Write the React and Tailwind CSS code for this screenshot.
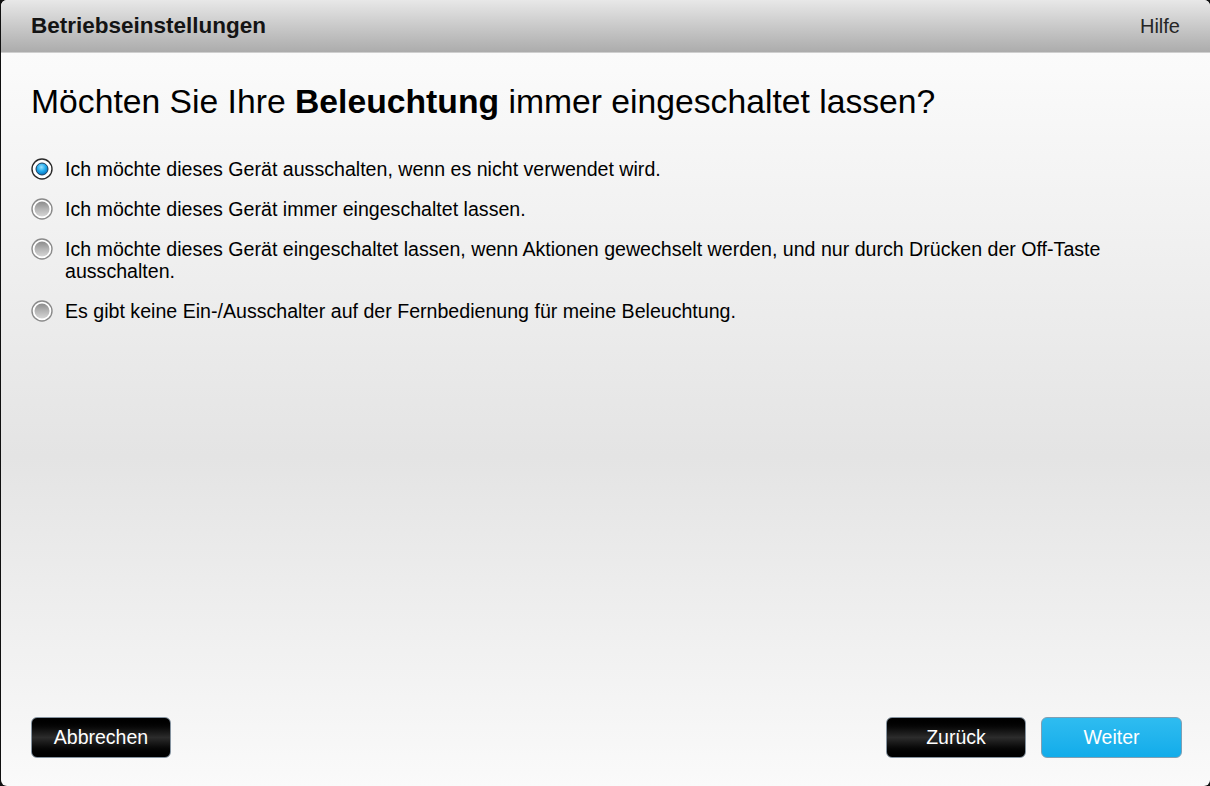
import React, { useState } from "react";

const options = [
  "Ich möchte dieses Gerät ausschalten, wenn es nicht verwendet wird.",
  "Ich möchte dieses Gerät immer eingeschaltet lassen.",
  "Ich möchte dieses Gerät eingeschaltet lassen, wenn Aktionen gewechselt werden, und nur durch Drücken der Off-Taste ausschalten.",
  "Es gibt keine Ein-/Ausschalter auf der Fernbedienung für meine Beleuchtung.",
];

const Radio = ({ checked }) => (
  <svg width="22" height="22" viewBox="0 0 22 22" className="shrink-0">
    <defs>
      <radialGradient id="blueDot" cx="45%" cy="35%" r="65%">
        <stop offset="0%" stopColor="#9be3ff" />
        <stop offset="55%" stopColor="#1fa9ec" />
        <stop offset="100%" stopColor="#0a6fb8" />
      </radialGradient>
      <linearGradient id="grayDot" x1="0" y1="0" x2="0" y2="1">
        <stop offset="0%" stopColor="#8c8c8c" />
        <stop offset="50%" stopColor="#b4b4b4" />
        <stop offset="100%" stopColor="#d6d6d6" />
      </linearGradient>
    </defs>
    <circle cx="11" cy="11" r="10" fill="#fff" stroke={checked ? "#2a2a2a" : "#8a8a8a"} strokeWidth="1.4" />
    {checked ? (
      <circle cx="11" cy="11" r="6" fill="url(#blueDot)" stroke="#1c3e5c" strokeWidth="1" />
    ) : (
      <circle cx="11" cy="11" r="7.5" fill="url(#grayDot)" />
    )}
  </svg>
);

const DarkButton = ({ children }) => (
  <button className="flex h-[41px] w-[140px] items-center justify-center rounded-[6px] border border-[#8593a0] bg-linear-to-b from-black via-[#2c2c2c] to-black text-[19.5px] text-white">
    {children}
  </button>
);

export default function App() {
  const [selected, setSelected] = useState(0);

  return (
    <div className="h-[786px] w-[1210px] bg-[#101010] pl-px font-['Liberation_Sans',Arial,sans-serif]">
      <div className="flex h-full flex-col overflow-hidden rounded-[6px] bg-linear-to-b from-[#fefefe] via-[#e4e4e4] via-58% to-[#fafafa]">
        <div className="flex h-[53px] shrink-0 items-center justify-between border-b border-[#cfcfcf] bg-linear-to-b from-[#e8e8e8] to-[#acacac] pl-[30px] pr-[30px]">
          <span className="text-[22.5px] font-bold text-[#141414]">Betriebseinstellungen</span>
          <span className="text-[20px] text-[#262626]">Hilfe</span>
        </div>

        <div className="flex flex-1 flex-col pl-[30px] pr-[28px]">
          <h1 className="mt-[27px] text-[33.7px] leading-[42px] text-black">
            Möchten Sie Ihre <b>Beleuchtung</b> immer eingeschaltet lassen?
          </h1>

          <div className="mt-[36px] flex flex-col gap-[18px]">
            {options.map((text, i) => (
              <label
                key={i}
                onClick={() => setSelected(i)}
                className="flex cursor-pointer items-start gap-[12px] pr-[70px] text-[19.6px] leading-[22px] text-black"
              >
                <Radio checked={selected === i} />
                <span>{text}</span>
              </label>
            ))}
          </div>

          <div className="mt-auto mb-[28px] flex items-center">
            <DarkButton>Abbrechen</DarkButton>
            <div className="ml-auto flex gap-[15px]">
              <DarkButton>Zurück</DarkButton>
              <button className="flex h-[41px] w-[141px] items-center justify-center rounded-[6px] border border-[#7e9fb4] bg-linear-to-b from-[#2ebcf0] to-[#10acea] text-[19.5px] text-white">
                Weiter
              </button>
            </div>
          </div>
        </div>
      </div>
    </div>
  );
}
